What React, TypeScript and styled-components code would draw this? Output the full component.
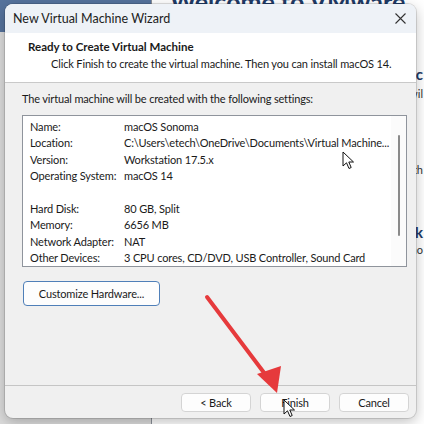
import styled, { createGlobalStyle } from "styled-components";

const GlobalStyle = createGlobalStyle`
  html, body {
    margin: 0;
    padding: 0;
  }
  body {
    width: 424px;
    height: 424px;
    overflow: hidden;
    font-family: Lato, "Noto Sans", sans-serif;
  }
`;

// desktop behind the wizard: workstation home page
const Desktop = styled.div`
  position: relative;
  width: 424px;
  height: 424px;
  overflow: hidden;
  display: flex;
  background: #ffffff;
`;

const SideBar = styled.div`
  width: 151px;
  flex-shrink: 0;
  display: flex;
  flex-direction: column;
  border-right: 1px solid #8a8f98;
  background: #dcdcdc;
`;

const SideBarTop = styled.div`
  height: 32px;
  background: #56739d;
`;

const MainArea = styled.div`
  flex: 1;
  padding: 0 1px 0 18px;
  display: flex;
  flex-direction: column;
  align-items: flex-end;
  color: #1f3b68;
  min-width: 0;
`;

const Welcome = styled.div`
  align-self: flex-start;
  font-size: 25px;
  line-height: 2px;
  font-weight: 700;
  white-space: nowrap;
`;

// only the tail of each line shows beside the wizard
const BgLine = styled.div<{ $bold?: boolean; $top: number }>`
  margin-top: ${(p) => p.$top}px;
  font-size: ${(p) => (p.$bold ? 15 : 11)}px;
  line-height: 16px;
  font-weight: ${(p) => (p.$bold ? 700 : 400)};
  color: ${(p) => (p.$bold ? "#1f3b68" : "#333")};
  white-space: nowrap;
`;

const Dialog = styled.div`
  position: absolute;
  left: 5px;
  top: 4px;
  width: 411px;
  height: 414px;
  border-radius: 8px;
  overflow: hidden;
  display: flex;
  flex-direction: column;
  background: #f0f0f0;
  box-shadow: 0 0 0 1px rgba(0, 0, 0, 0.12), 0 4px 14px rgba(0, 0, 0, 0.25);
  font-size: 11px;
  letter-spacing: -0.15px;
  color: #1a1a1a;
`;

const TitleBar = styled.div`
  height: 29px;
  flex-shrink: 0;
  display: flex;
  align-items: center;
  justify-content: space-between;
  padding: 0 9px 0 8px;
  background: #eef2f7;
  font-size: 12.5px;
  letter-spacing: 0;
  color: #222;
`;

const CloseBtn = styled.div`
  width: 14px;
  height: 14px;
  display: flex;
  align-items: center;
  justify-content: center;
`;

const Header = styled.div`
  height: 50px;
  flex-shrink: 0;
  background: #ffffff;
  border-bottom: 1px solid #c9c9c9;
  padding: 6px 0 0 23px;
  box-sizing: border-box;
`;

const HeaderTitle = styled.div`
  font-weight: 700;
  font-size: 11.5px;
  letter-spacing: 0;
  line-height: 16px;
`;

const HeaderSub = styled.div`
  padding-left: 23px;
  line-height: 17px;
  white-space: nowrap;
`;

const Body = styled.div`
  flex: 1;
  padding: 8px 9px 0 17px;
  display: flex;
  flex-direction: column;
  align-items: flex-start;
`;

const Intro = styled.div`
  line-height: 16px;
`;

const ListBox = styled.div`
  margin-top: 8px;
  width: 385px;
  height: 152px;
  box-sizing: border-box;
  border: 1px solid #8f949c;
  background: #ffffff;
  display: flex;
`;

const Rows = styled.div`
  flex: 1;
  padding: 3px 0 0 7px;
`;

const Row = styled.div`
  display: grid;
  grid-template-columns: 94px 1fr;
  height: 16.4px;
  line-height: 16.4px;
  white-space: nowrap;
`;

const ScrollTrack = styled.div`
  width: 15px;
  background: #fbfbfb;
  display: flex;
  justify-content: center;
  padding-top: 19px;
`;

const ScrollThumb = styled.div`
  width: 2px;
  height: 101px;
  border-radius: 1px;
  background: #8a8a8a;
`;

const Button = styled.div<{ $focus?: boolean }>`
  box-sizing: border-box;
  display: flex;
  align-items: center;
  justify-content: center;
  background: #fdfdfd;
  border: 1px solid ${(p) => (p.$focus ? "#4f7fb8" : "#d4d4d4")};
  border-radius: 4px;
  color: #1a1a1a;
`;

const CustomizeBtn = styled(Button)`
  margin-top: 14px;
  margin-left: 1px;
  width: 137px;
  height: 25px;
`;

const Footer = styled.div`
  height: 33px;
  flex-shrink: 0;
  border-top: 1px solid #c5c5c5;
  display: flex;
  justify-content: flex-end;
  align-items: flex-start;
  gap: 9px;
  padding: 7px 7px 0 0;
  box-sizing: border-box;
`;

const FooterBtn = styled(Button)`
  width: 70px;
  height: 19px;
`;

const Overlay = styled.svg`
  position: absolute;
  left: 0;
  top: 0;
  pointer-events: none;
`;

const Cursor = styled.svg<{ $x: number; $y: number }>`
  position: absolute;
  left: ${(p) => p.$x}px;
  top: ${(p) => p.$y}px;
`;

const settings: [string, string][] = [
  ["Name:", "macOS Sonoma"],
  ["Location:", "C:\\Users\\etech\\OneDrive\\Documents\\Virtual Machine..."],
  ["Version:", "Workstation 17.5.x"],
  ["Operating System:", "macOS 14"],
  ["", ""],
  ["Hard Disk:", "80 GB, Split"],
  ["Memory:", "6656 MB"],
  ["Network Adapter:", "NAT"],
  ["Other Devices:", "3 CPU cores, CD/DVD, USB Controller, Sound Card"],
];

function Pointer({ x, y }: { x: number; y: number }) {
  return (
    <Cursor $x={x} $y={y} width="13" height="19" viewBox="0 0 13 19">
      <path
        d="M1 1 L1 15 L4.5 11.8 L7 17.5 L9.2 16.5 L6.8 11 L11.5 11 Z"
        fill="#ffffff"
        stroke="#111"
        strokeWidth="1"
        strokeLinejoin="round"
      />
    </Cursor>
  );
}

export default function App() {
  return (
    <>
      <GlobalStyle />
      <Desktop>
        <SideBar>
          <SideBarTop />
        </SideBar>
        <MainArea>
          <Welcome>Welcome to VMware</Welcome>
          <BgLine $bold $top={64}>c</BgLine>
          <BgLine $top={4}>wil</BgLine>
          <BgLine $top={60}>th</BgLine>
          <BgLine $bold $top={46}>k</BgLine>
          <BgLine $top={2}>no</BgLine>
        </MainArea>

        <Dialog>
          <TitleBar>
            <span>New Virtual Machine Wizard</span>
            <CloseBtn>
              <svg width="11" height="11" viewBox="0 0 11 11">
                <path d="M0.5 0.5 L10.5 10.5 M10.5 0.5 L0.5 10.5" stroke="#333" strokeWidth="1.1" />
              </svg>
            </CloseBtn>
          </TitleBar>
          <Header>
            <HeaderTitle>Ready to Create Virtual Machine</HeaderTitle>
            <HeaderSub>
              Click Finish to create the virtual machine. Then you can install macOS 14.
            </HeaderSub>
          </Header>
          <Body>
            <Intro>The virtual machine will be created with the following settings:</Intro>
            <ListBox>
              <Rows>
                {settings.map(([k, v], i) => (
                  <Row key={i}>
                    <span>{k}</span>
                    <span>{v}</span>
                  </Row>
                ))}
              </Rows>
              <ScrollTrack>
                <ScrollThumb />
              </ScrollTrack>
            </ListBox>
            <CustomizeBtn $focus>Customize Hardware...</CustomizeBtn>
          </Body>
          <Footer>
            <FooterBtn>&lt; Back</FooterBtn>
            <FooterBtn>Finish</FooterBtn>
            <FooterBtn>Cancel</FooterBtn>
          </Footer>
        </Dialog>

        <Overlay width="424" height="424" viewBox="0 0 424 424">
          <line x1="207" y1="297" x2="268" y2="378" stroke="#e63a3c" strokeWidth="4" strokeLinecap="round" />
          <path d="M277 393 L257 374 L281 366 Z" fill="#e63a3c" />
        </Overlay>
        <Pointer x={342} y={151} />
        <Pointer x={283} y={399} />
      </Desktop>
    </>
  );
}
